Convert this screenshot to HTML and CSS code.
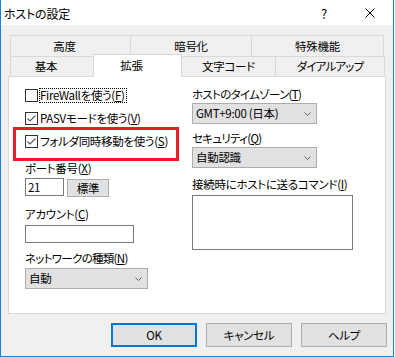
FILE: index.html
```html
<!DOCTYPE html>
<html lang="ja">
<head>
<meta charset="utf-8">
<title>ホストの設定</title>
<link rel="stylesheet" href="styles.css">
</head>
<body>
<div class="window">
  <div class="titlebar">
    <span class="title">ホストの設定</span>
    <span class="tbtn help">?</span>
    <span class="tbtn close"><svg width="10" height="10" viewBox="0 0 10 10"><path d="M0.5 0.5L9.5 9.5M9.5 0.5L0.5 9.5" stroke="#000" stroke-width="1" fill="none"/></svg></span>
  </div>
  <div class="content">
    <div class="tabs">
      <div class="tabrow toprow">
        <div class="tab t1 shift">高度</div>
        <div class="tab t2">暗号化</div>
        <div class="tab t3">特殊機能</div>
      </div>
      <div class="tabrow botrow">
        <div class="tab b1 shift">基本</div>
        <div class="tab b2 shift active">拡張</div>
        <div class="tab b3">文字コード</div>
        <div class="tab b4">ダイアルアップ</div>
      </div>
    </div>
    <div class="panel">
      <div class="col left">
        <div class="cbrow">
          <span class="box"></span><span class="cbl focus">FireWallを使う(<u>F</u>)</span>
        </div>
        <div class="cbrow">
          <span class="box"><svg width="11" height="11" viewBox="0 0 11 11"><path d="M1.5 5.5L4 8L9.5 2.5" stroke="#555" stroke-width="1.1" fill="none"/></svg></span><span class="cbl">PASVモードを使う(<u>V</u>)</span>
        </div>
        <div class="cbrow mark">
          <span class="box"><svg width="11" height="11" viewBox="0 0 11 11"><path d="M1.5 5.5L4 8L9.5 2.5" stroke="#555" stroke-width="1.1" fill="none"/></svg></span><span class="cbl">フォルダ同時移動を使う(<u>S</u>)</span>
        </div>
        <div class="lbl l-port">ポート番号(<u>X</u>)</div>
        <div class="portrow">
          <input class="field port" type="text" value="21">
          <div class="btn std">標準</div>
        </div>
        <div class="lbl l-acc">アカウント(<u>C</u>)</div>
        <input class="field acc" type="text" value="">
        <div class="lbl l-net narrow">ネットワークの種類(<u>N</u>)</div>
        <div class="combo net"><span class="cv">自動</span><svg class="chev" width="7" height="4" viewBox="0 0 7 4"><path d="M0.5 0.5L3.5 3.5L6.5 0.5" stroke="#606060" stroke-width="1" fill="none"/></svg></div>
      </div>
      <div class="col right">
        <div class="lbl l-tz narrow">ホストのタイムゾーン(<u>T</u>)</div>
        <div class="combo tz"><span class="cv">GMT+9:00 (日本)</span><svg class="chev" width="7" height="4" viewBox="0 0 7 4"><path d="M0.5 0.5L3.5 3.5L6.5 0.5" stroke="#606060" stroke-width="1" fill="none"/></svg></div>
        <div class="lbl l-sec narrow">セキュリティ(<u>Q</u>)</div>
        <div class="combo sec"><span class="cv">自動認識</span><svg class="chev" width="7" height="4" viewBox="0 0 7 4"><path d="M0.5 0.5L3.5 3.5L6.5 0.5" stroke="#606060" stroke-width="1" fill="none"/></svg></div>
        <div class="lbl l-cmd">接続時にホストに送るコマンド(<u>I</u>)</div>
        <textarea class="cmd"></textarea>
      </div>
    </div>
    <div class="buttons">
      <div class="btn dlg default">OK</div>
      <div class="btn dlg">キャンセル</div>
      <div class="btn dlg">ヘルプ</div>
    </div>
  </div>
</div>
</body>
</html>
```
FILE: styles.css
```css
* { box-sizing: border-box; }
html, body { margin: 0; padding: 0; background: #fff; }
body {
  font-family: "Noto Sans CJK JP", sans-serif;
  font-size: 11.5px;
  letter-spacing: -0.3px;
  color: #000;
  font-feature-settings: "palt";
}
u { text-decoration: underline; text-underline-offset: 1px; }

.window {
  width: 394px;
  height: 357px;
  border: 1px solid #1883d7;
  border-top: none;
  background: #f0f0f0;
  display: flex;
  flex-direction: column;
}
.titlebar {
  height: 25px;
  flex-shrink: 0;
  background: #fff;
  display: flex;
  align-items: center;
  padding-left: 3px;
}
.title { flex: 1; line-height: 15px; padding-top: 1px; font-size: 12px; letter-spacing: -0.2px; }
.tbtn {
  width: 46px;
  height: 25px;
  display: flex;
  align-items: center;
  justify-content: center;
}
.help { font-size: 13px; padding-top: 1px; }

.content {
  flex: 1;
  padding: 10px 7px 0 7px;
  display: flex;
  flex-direction: column;
}
.tabs { margin-left: 2px; }
.tabrow { display: flex; }
.tab {
  height: 21px;
  border: 1px solid #d9d9d9;
  border-bottom: none;
  margin-left: -1px;
  background: #f0f0f0;
  display: flex;
  align-items: center;
  justify-content: center;
  line-height: 15px;
}
.tab:first-child { margin-left: 0; }
.botrow .tab { height: 20px; }
.shift { padding-right: 12px; }
.t1 { width: 121px; }
.t2 { width: 122px; }
.t3 { width: 133px; }
.b1 { width: 84px; }
.b2 { width: 89px; }
.b3 { width: 95px; }
.b4 { width: 110px; letter-spacing: -0.8px; }
.tab.active {
  height: 23px;
  margin-top: -2px;
  margin-bottom: -1px;
  background: #fff;
  position: relative;
  z-index: 1;
  padding-bottom: 1px;
}

.panel {
  height: 238px;
  background: #fff;
  border: 1px solid #d9d9d9;
  display: grid;
  grid-template-columns: 167px 1fr;
  align-items: start;
  padding: 10px 0 0 16px;
}
.col { display: flex; flex-direction: column; align-items: flex-start; }

.cbrow {
  height: 17px;
  display: flex;
  align-items: center;
  position: relative;
}
.cbrow + .cbrow { margin-top: 6px; }
.box {
  width: 13px;
  height: 13px;
  border: 1px solid #333;
  background: #fff;
  margin-right: 1px;
  flex-shrink: 0;
  display: flex;
}
.cbl {
  line-height: 13px;
  height: 15px;
  border: 1px solid transparent;
  padding-right: 1px;
}
.cbl.focus { border: 1px dotted #000; }
.cbrow.mark::after {
  content: "";
  position: absolute;
  left: -12px;
  top: -6px;
  width: 160px;
  height: 28px;
  border: 3px solid #ed1c24;
}

.lbl { line-height: 15px; height: 15px; white-space: nowrap; }
.narrow { letter-spacing: -0.7px; }
.l-port { margin-top: 11px; }
.l-acc { margin-top: 10px; }
.l-net { margin-top: 8px; }
.l-sec { margin-top: 7px; }
.l-cmd { margin-top: 9px; }

.portrow { display: flex; margin-top: 2px; }
.field {
  height: 18px;
  border: 1px solid #7a7a7a;
  background: #fff;
  font: inherit;
  letter-spacing: inherit;
  font-feature-settings: "palt";
  padding: 0 2px;
  margin: 0;
  outline: none;
  line-height: 14px;
}
.port { width: 39px; }
.acc { width: 109px; margin-top: 3px; }

.btn {
  background: #e1e1e1;
  border: 1px solid #adadad;
  display: flex;
  align-items: center;
  justify-content: center;
  line-height: 15px;
}
.std { width: 42px; height: 18px; margin-left: 3px; margin-top: 1px; }

.combo {
  height: 21px;
  background: #e1e1e1;
  border: 1px solid #adadad;
  display: flex;
  align-items: center;
  padding: 0 5px 0 3px;
  line-height: 15px;
}
.cv { flex: 1; white-space: nowrap; }
.chev { flex-shrink: 0; }
.net { width: 123px; margin-top: 2px; }
.tz { width: 125px; margin-top: 1px; }
.sec { width: 125px; margin-top: 1px; }

.cmd {
  width: 161px;
  height: 55px;
  margin: 3px 0 0 0;
  border: 1px solid #7a7a7a;
  background: #fff;
  resize: none;
  font: inherit;
  padding: 1px 2px;
  outline: none;
  display: block;
}

.buttons {
  display: flex;
  justify-content: flex-end;
  gap: 9px;
  margin-top: 9px;
  margin-right: -1px;
}
.dlg { width: 86px; height: 24px; }
.dlg.default { border: 2px solid #0078d7; }
```
